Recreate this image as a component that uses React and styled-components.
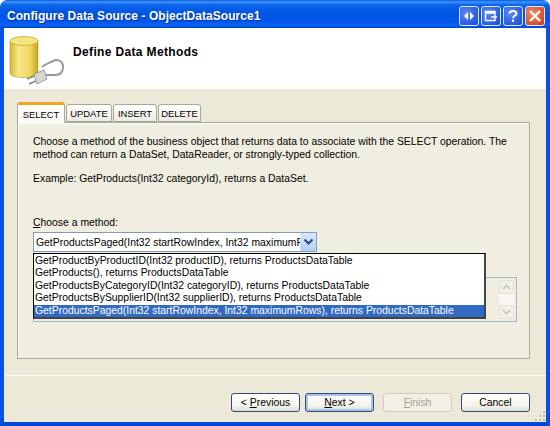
import React from "react";
import styled, { createGlobalStyle } from "styled-components";

const GlobalStyle = createGlobalStyle`
  html, body {
    margin: 0;
    padding: 0;
    background: #ffffff;
  }
  * {
    box-sizing: border-box;
  }
`;

const uiFont = `"Liberation Sans", Arial, sans-serif`;

const methods = [
  "GetProductByProductID(Int32 productID), returns ProductsDataTable",
  "GetProducts(), returns ProductsDataTable",
  "GetProductsByCategoryID(Int32 categoryID), returns ProductsDataTable",
  "GetProductsBySupplierID(Int32 supplierID), returns ProductsDataTable",
  "GetProductsPaged(Int32 startRowIndex, Int32 maximumRows), returns ProductsDataTable",
];

const tabs = [
  { name: "SELECT", width: 48 },
  { name: "UPDATE", width: 46 },
  { name: "INSERT", width: 44 },
  { name: "DELETE", width: 43 },
];

const DataSourceIcon = () => (
  <svg width="56" height="52" viewBox="0 0 56 52">
    <defs>
      <linearGradient id="can" x1="0" x2="1" y1="0" y2="0">
        <stop offset="0" stopColor="#d8b530" />
        <stop offset="0.3" stopColor="#f7e98a" />
        <stop offset="0.7" stopColor="#f0d860" />
        <stop offset="1" stopColor="#c9a52a" />
      </linearGradient>
    </defs>
    <path d="M1 6 V38 C1 44 29 44 29 38 V6 Z" fill="url(#can)" stroke="#b8982c" strokeWidth="0.6" />
    <ellipse cx="15" cy="6" rx="14" ry="4.5" fill="#f5e480" stroke="#c8a838" strokeWidth="0.8" />
    <path d="M36 40 H46 C52 40 54 36 54 32 C54 25 48 24 44 26 C40 28 36 29 33 32" fill="none" stroke="#9a9a94" strokeWidth="2" />
    <path d="M25 39 L35 35 L38 44 L28 49 Z" fill="#d6d6d2" stroke="#8a8a86" strokeWidth="0.8" />
    <path d="M25 41 L18 44 M27 46 L20 49" stroke="#85857f" strokeWidth="1.6" />
  </svg>
);

const CaptionIcon = ({ kind }) => (
  <svg width="14" height="14" viewBox="0 0 14 14" fill="none">
    {kind === "nav" && <path d="M6 3 L2 7 L6 11 Z M8 3 L12 7 L8 11 Z" fill="#ffffff" />}
    {kind === "panel" && (
      <path d="M1.5 2.5 H11 V11.5 H1.5 Z M1.5 4 H11 M7 8 H13" stroke="#ffffff" strokeWidth="1.4" />
    )}
    {kind === "help" && (
      <path
        d="M3.5 4.5 C3.5 1 10.5 1 10.5 4.5 C10.5 7 7 6.5 7 9 M7 10.5 V13"
        stroke="#ffffff"
        strokeWidth="2"
      />
    )}
    {kind === "close" && <path d="M2 2 L12 12 M12 2 L2 12" stroke="#ffffff" strokeWidth="2.4" />}
  </svg>
);

const ScrollArrow = ({ up }) => (
  <svg width="9" height="6" viewBox="0 0 9 6" fill="none">
    <path d={up ? "M1 5 L4.5 1.5 L8 5" : "M1 1 L4.5 4.5 L8 1"} stroke="#c5c5b8" strokeWidth="1.6" />
  </svg>
);

const App = () => (
  <>
    <GlobalStyle />
    <Window>
      <TitleBar>
        <Title>Configure Data Source - ObjectDataSource1</Title>
        <CaptionButtons>
          <CaptionButton>
            <CaptionIcon kind="nav" />
          </CaptionButton>
          <CaptionButton>
            <CaptionIcon kind="panel" />
          </CaptionButton>
          <CaptionButton>
            <CaptionIcon kind="help" />
          </CaptionButton>
          <CaptionButton $danger>
            <CaptionIcon kind="close" />
          </CaptionButton>
        </CaptionButtons>
      </TitleBar>
      <Frame>
        <Header>
          <DataSourceIcon />
          <HeaderTitle>Define Data Methods</HeaderTitle>
        </Header>
        <Body>
          <TabRow>
            {tabs.map((tab, i) => (
              <Tab key={tab.name} $active={i === 0} $width={tab.width}>
                {tab.name}
              </Tab>
            ))}
          </TabRow>
          <Panel>
            <Description>
              Choose a method of the business object that returns data to associate with the SELECT operation. The
              <br />
              method can return a DataSet, DataReader, or strongly-typed collection.
            </Description>
            <Example>Example: GetProducts(Int32 categoryId), returns a DataSet.</Example>
            <FieldLabel>
              <u>C</u>hoose a method:
            </FieldLabel>
            <SelectBox>
              <SelectValue>GetProductsPaged(Int32 startRowIndex, Int32 maximumRows)</SelectValue>
              <SelectArrow>
                <svg width="11" height="8" viewBox="0 0 11 8" fill="none">
                  <path d="M1.5 1.5 L5.5 5.5 L9.5 1.5" stroke="#2b4a8a" strokeWidth="2.2" />
                </svg>
              </SelectArrow>
            </SelectBox>
            <SignatureBox>
              <Scrollbar>
                <ScrollButton>
                  <ScrollArrow up />
                </ScrollButton>
                <ScrollTrack />
                <ScrollButton>
                  <ScrollArrow />
                </ScrollButton>
              </Scrollbar>
            </SignatureBox>
            <MethodList>
              {methods.map((method, i) => (
                <MethodItem key={method} $selected={i === methods.length - 1}>
                  {method}
                </MethodItem>
              ))}
            </MethodList>
          </Panel>
        </Body>
        <Footer>
          <ButtonGroup>
            <WizardButton>
              &lt; <u>P</u>revious
            </WizardButton>
            <WizardButton $default>
              <u>N</u>ext &gt;
            </WizardButton>
          </ButtonGroup>
          <WizardButton disabled>
            <u>F</u>inish
          </WizardButton>
          <WizardButton>Cancel</WizardButton>
          <ResizeGrip>
            <svg width="12" height="12" viewBox="0 0 12 12">
              <path d="M9 1 h2 v2 h-2 Z M5 5 h2 v2 h-2 Z M9 5 h2 v2 h-2 Z M1 9 h2 v2 h-2 Z M5 9 h2 v2 h-2 Z M9 9 h2 v2 h-2 Z" fill="#c4c0ac" />
            </svg>
          </ResizeGrip>
        </Footer>
      </Frame>
    </Window>
  </>
);

export default App;

const Window = styled.div`
  width: 550px;
  height: 426px;
  display: flex;
  flex-direction: column;
  overflow: hidden;
  border-radius: 7px 7px 0 0;
  font-family: ${uiFont};
  font-size: 10.4px;
  color: #000000;
`;

const TitleBar = styled.div`
  height: 28px;
  flex: none;
  display: flex;
  align-items: center;
  justify-content: space-between;
  padding: 3px 5px 0 7px;
  background: linear-gradient(
    to bottom,
    #0a5ae0 0,
    #3d95ff 2px,
    #0a63ea 5px,
    #0055e3 14px,
    #0058ee 22px,
    #0a66f5 25px,
    #0044c8 28px
  );
`;

const Title = styled.div`
  font-family: "Liberation Sans", Arial, sans-serif;
  font-size: 12px;
  font-weight: bold;
  letter-spacing: 0.05px;
  color: #ffffff;
  text-shadow: 1px 1px 1px #0a2f9a;
  white-space: nowrap;
`;

const CaptionButtons = styled.div`
  display: flex;
  gap: 2px;
`;

const CaptionButton = styled.div`
  width: 20px;
  height: 20px;
  display: flex;
  align-items: center;
  justify-content: center;
  border: 1px solid #dfe8ff;
  border-radius: 3px;
  background: ${(p) =>
    p.$danger
      ? "radial-gradient(circle at 35% 35%, #ee8a63, #d8512c 70%, #b83a18)"
      : "radial-gradient(circle at 35% 35%, #5d8cf0, #2a5be0 70%, #1f49c8)"};
`;

const Frame = styled.div`
  flex: 1;
  display: flex;
  flex-direction: column;
  min-height: 0;
  border-left: 4px solid #0353e6;
  border-right: 4px solid #0353e6;
  border-bottom: 4px solid #0348d2;
  background: #ece9d8;
`;

const Header = styled.div`
  height: 61px;
  flex: none;
  display: flex;
  align-items: flex-start;
  gap: 8px;
  padding: 7px 0 0 5px;
  background: #ffffff;
`;

const HeaderTitle = styled.div`
  margin-top: 10px;
  font-size: 12px;
  font-weight: bold;
  letter-spacing: 0.35px;
`;

const Body = styled.div`
  flex: 1;
  min-height: 0;
  display: flex;
  flex-direction: column;
  padding: 13px 16px 16px 13px;
`;

const TabRow = styled.div`
  height: 20px;
  flex: none;
  display: flex;
  align-items: flex-end;
  gap: 1px;
  position: relative;
  z-index: 1;
`;

const Tab = styled.div`
  width: ${(p) => p.$width}px;
  height: ${(p) => (p.$active ? "21px" : "18px")};
  margin-bottom: ${(p) => (p.$active ? "-1px" : "0")};
  display: flex;
  align-items: center;
  justify-content: center;
  font-size: 9.4px;
  border: 1px solid #a7a79a;
  border-bottom: ${(p) => (p.$active ? "none" : "1px solid #a7a79a")};
  border-top: ${(p) => (p.$active ? "3px solid #f2a32e" : "1px solid #a7a79a")};
  border-radius: 3px 3px 0 0;
  background: ${(p) => (p.$active ? "#fbfbf8" : "linear-gradient(to bottom, #ffffff, #ecebe3)")};
`;

const Panel = styled.div`
  flex: 1;
  min-height: 0;
  position: relative;
  padding: 12px 12px 0 15px;
  border: 1px solid #a8a89c;
  background: #f0eee1;
  box-shadow: inset 1px 1px 0 #fbfbf6;
`;

const Description = styled.div`
  line-height: 13px;
  white-space: nowrap;
`;

const Example = styled.div`
  margin-top: 11px;
  line-height: 13px;
`;

const FieldLabel = styled.div`
  margin-top: 31px;
  line-height: 13px;
`;

const SelectBox = styled.div`
  width: 284px;
  height: 20px;
  margin-top: 3px;
  display: flex;
  align-items: center;
  border: 1px solid #7f9db9;
  background: #ffffff;
`;

const SelectValue = styled.div`
  flex: 1;
  min-width: 0;
  padding-left: 2px;
  overflow: hidden;
  white-space: nowrap;
`;

const SelectArrow = styled.div`
  width: 16px;
  height: 18px;
  flex: none;
  display: flex;
  align-items: center;
  justify-content: center;
  border-radius: 2px;
  background: linear-gradient(to bottom, #dbe7fd, #b5cdf7);
`;

const SignatureBox = styled.div`
  width: 484px;
  height: 45px;
  margin-top: 25px;
  display: flex;
  justify-content: flex-end;
  padding: 2px;
  border: 1px solid #a5b8cb;
  background: #f0eee1;
`;

const Scrollbar = styled.div`
  width: 15px;
  display: flex;
  flex-direction: column;
`;

const ScrollButton = styled.div`
  height: 14px;
  flex: none;
  display: flex;
  align-items: center;
  justify-content: center;
  border: 1px solid #e3e1d4;
  border-radius: 2px;
  background: #f2f0e6;
`;

const ScrollTrack = styled.div`
  flex: 1;
  background: #f8f7f1;
`;

const MethodList = styled.div`
  position: absolute;
  left: 15px;
  top: 130px;
  width: 453px;
  padding: 1px 0 0;
  border: 1px solid #000000;
  border-right: 2px solid #444444;
  border-bottom: 2px solid #444444;
  background: #ffffff;
`;

const MethodItem = styled.div`
  height: 12.4px;
  line-height: 12.4px;
  padding-left: 1px;
  white-space: nowrap;
  color: ${(p) => (p.$selected ? "#ffffff" : "#000000")};
  background: ${(p) => (p.$selected ? "#316ac5" : "transparent")};
`;

const Footer = styled.div`
  height: 47px;
  flex: none;
  position: relative;
  display: flex;
  justify-content: flex-end;
  gap: 9px;
  padding: 17px 16px 0 0;
  border-top: 1px solid #fbfaf3;
`;

const ButtonGroup = styled.div`
  display: flex;
  gap: 5px;
`;

const WizardButton = styled.button`
  width: 69px;
  height: 19px;
  padding: 0;
  font-family: ${uiFont};
  font-size: 10.4px;
  color: ${(p) => (p.disabled ? "#a5a392" : "#000000")};
  border: 1px solid ${(p) => (p.disabled ? "#cfccb9" : "#2f4d74")};
  border-radius: 3px;
  background: linear-gradient(to bottom, #ffffff, #f4f3ec 70%, #dedccf);
  box-shadow: ${(p) => (p.$default ? "inset 0 0 0 2px #a9c2ea" : "none")};
  ${(p) => p.disabled && "background: #f2f0e5;"}
`;

const ResizeGrip = styled.div`
  position: absolute;
  right: 0;
  bottom: 0;
  height: 12px;
  width: 12px;
`;
